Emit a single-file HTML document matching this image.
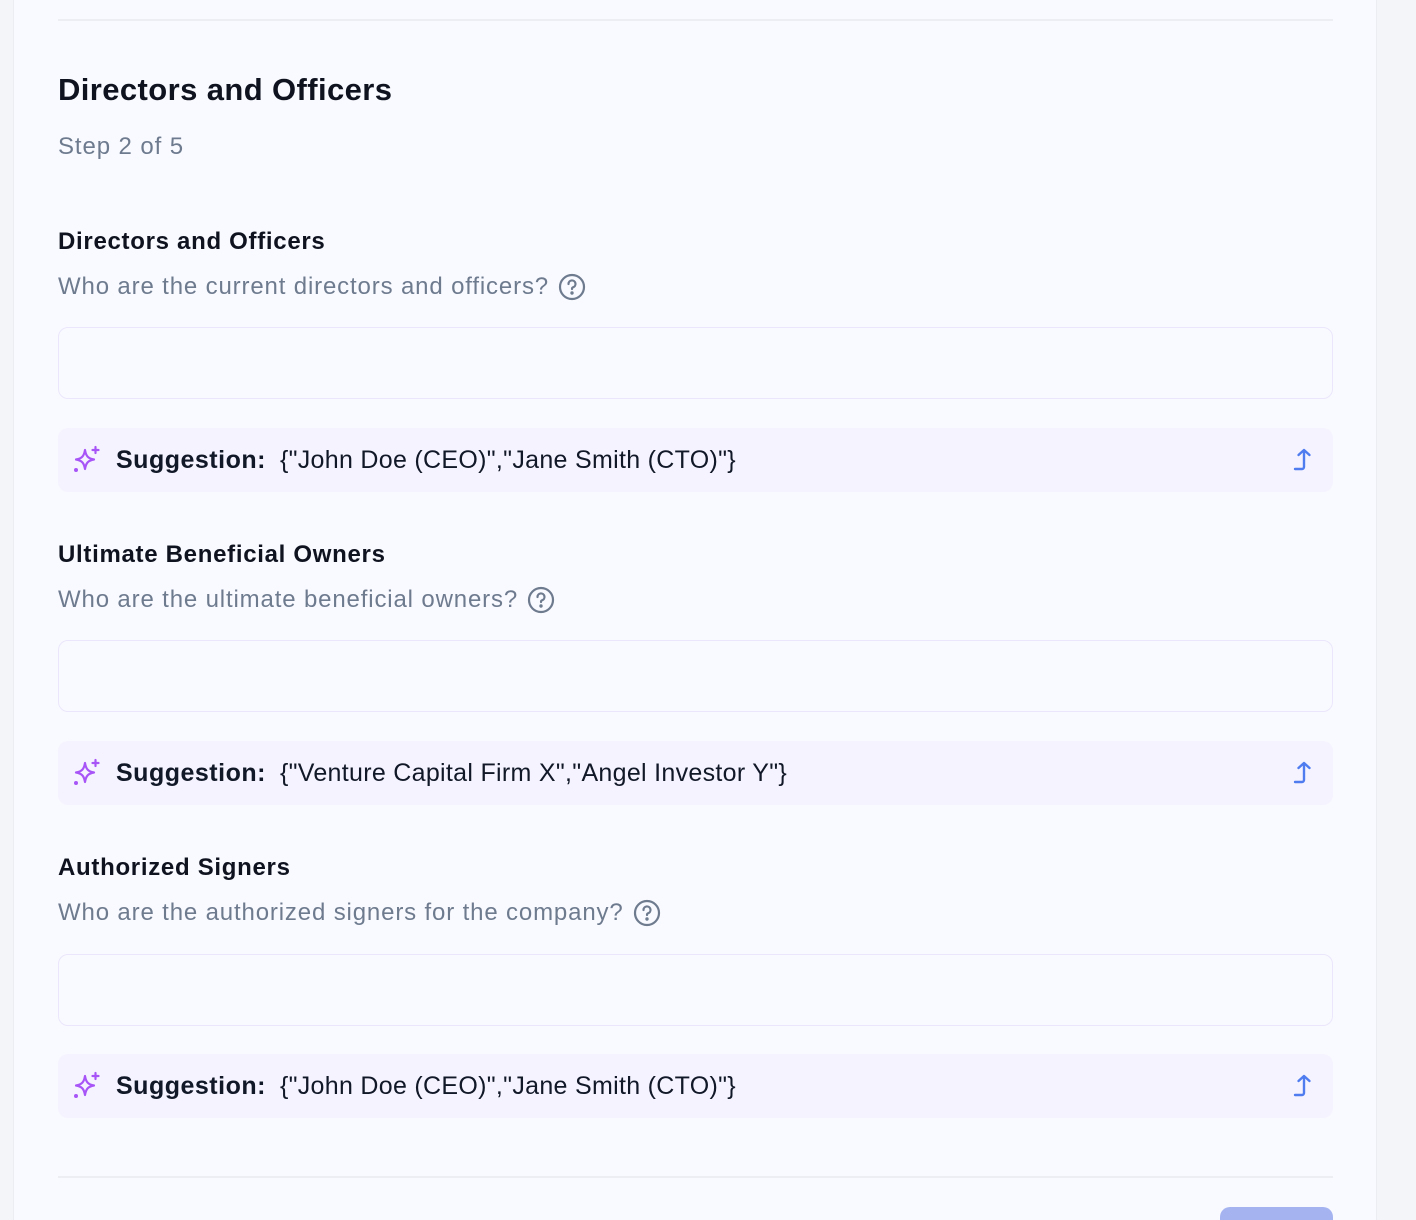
<!DOCTYPE html>
<html style="overflow:hidden;height:1220px"><head><style>
body{margin:0;width:1416px;height:1220px;background:#f4f5f9;font-family:"Liberation Sans",sans-serif;position:relative;overflow:hidden}
.card{position:absolute;left:13px;top:0;width:1362px;height:1220px;background:#f9faff;border-left:1px solid #ebedf2;border-right:1px solid #ebedf2}
.hr{position:absolute;left:58px;width:1275px;height:2px;background:#eceef3}
.t{position:absolute;left:58px;white-space:nowrap}
.h1{font-size:31px;font-weight:700;color:#0f1320;letter-spacing:0.4px}
.step{font-size:24px;color:#6e7b8f;letter-spacing:0.9px}
.lab{font-size:24px;font-weight:700;color:#0f1320;letter-spacing:0.7px}
.q{font-size:24px;color:#6e7b8f;display:flex;align-items:center;gap:9px;letter-spacing:0.85px}
.inp{position:absolute;left:58px;width:1273px;height:70px;border:1px solid #ebe6fb;border-radius:10px;background:#f9faff}
.sug{position:absolute;left:58px;width:1275px;height:64px;border-radius:10px;background:#f5f3ff;display:flex;align-items:center;font-size:25px;color:#111827;letter-spacing:0.3px}
.sug b{margin-left:14px;margin-right:14px;letter-spacing:0.5px}
.sug .ar{position:absolute;right:16px;top:19px}
.sug .sp{margin-left:14px}
.btn{position:absolute;left:1220px;top:1207px;width:113px;height:30px;border-radius:10px;background:#a5b4f0}
</style></head><body>
<div class="card"></div>
<div class="hr" style="top:19px"></div>
<div class="t h1" style="top:72px">Directors and Officers</div>
<div class="t step" style="top:133px">Step 2 of 5</div>

<div class="t lab" style="top:228px">Directors and Officers</div>
<div class="t q" style="top:273px">Who are the current directors and officers? <svg width="28" height="28" viewBox="0 0 28 28" fill="none" stroke="#6e7b8f" stroke-width="2.2" stroke-linecap="round"><circle cx="14" cy="14" r="12"/><path d="M10.5 11a3.5 3.5 0 1 1 4.5 3.3c-.7.3-1 .9-1 1.7"/><circle cx="14" cy="20" r=".6" fill="#6e7b8f"/></svg></div>
<div class="inp" style="top:327px"></div>
<div class="sug" style="top:428px">SPARK<b>Suggestion:</b>{"John Doe (CEO)","Jane Smith (CTO)"}ARROW</div>

<div class="t lab" style="top:541px">Ultimate Beneficial Owners</div>
<div class="t q" style="top:586px">Who are the ultimate beneficial owners? <svg width="28" height="28" viewBox="0 0 28 28" fill="none" stroke="#6e7b8f" stroke-width="2.2" stroke-linecap="round"><circle cx="14" cy="14" r="12"/><path d="M10.5 11a3.5 3.5 0 1 1 4.5 3.3c-.7.3-1 .9-1 1.7"/><circle cx="14" cy="20" r=".6" fill="#6e7b8f"/></svg></div>
<div class="inp" style="top:640px"></div>
<div class="sug" style="top:741px">SPARK<b>Suggestion:</b>{"Venture Capital Firm X","Angel Investor Y"}ARROW</div>

<div class="t lab" style="top:854px">Authorized Signers</div>
<div class="t q" style="top:899px">Who are the authorized signers for the company? <svg width="28" height="28" viewBox="0 0 28 28" fill="none" stroke="#6e7b8f" stroke-width="2.2" stroke-linecap="round"><circle cx="14" cy="14" r="12"/><path d="M10.5 11a3.5 3.5 0 1 1 4.5 3.3c-.7.3-1 .9-1 1.7"/><circle cx="14" cy="20" r=".6" fill="#6e7b8f"/></svg></div>
<div class="inp" style="top:954px"></div>
<div class="sug" style="top:1054px">SPARK<b>Suggestion:</b>{"John Doe (CEO)","Jane Smith (CTO)"}ARROW</div>

<div class="hr" style="top:1176px"></div>
<div class="btn"></div>
<script>
var sp='<svg class="sp" width="30" height="30" viewBox="0 0 30 30" fill="none" stroke="#a855f7" stroke-width="2.2" stroke-linejoin="round" stroke-linecap="round"><path d="M13 5c1 6 3 8.5 9 9.5-6 1-8 3.5-9 9.5-1-6-3-8.5-9-9.5 6-1 8-3.5 9-9.5z"/><path d="M23.5 2v6M20.5 5h6"/><circle cx="4" cy="25" r=".9" fill="#a855f7"/></svg>';
var ar='<svg class="ar" width="24" height="26" viewBox="0 0 24 26" fill="none" stroke="#4f7df0" stroke-width="2.4" stroke-linecap="round" stroke-linejoin="round"><path d="M2 22h7a2 2 0 0 0 2-2V4M5.5 8 11 3l5.5 5"/></svg>';
document.querySelectorAll('.sug').forEach(function(e){e.innerHTML=e.innerHTML.replace('SPARK',sp).replace('ARROW',ar);});
</script>
</body></html>
